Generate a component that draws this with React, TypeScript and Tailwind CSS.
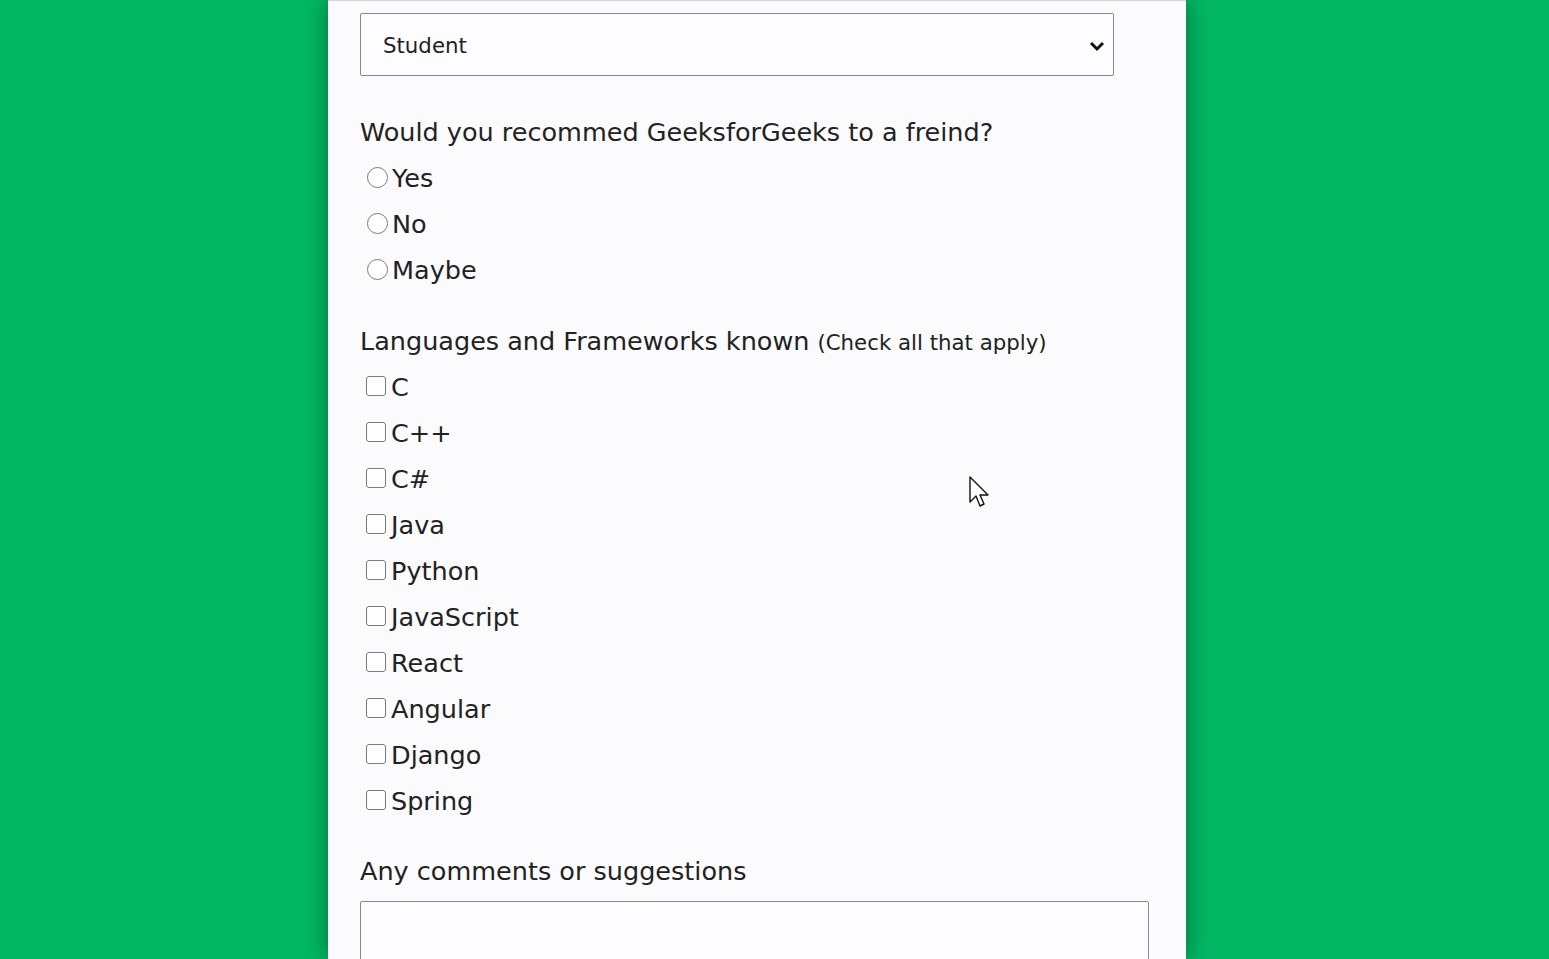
import React from "react";

const radios = ["Yes", "No", "Maybe"];
const langs = ["C", "C++", "C#", "Java", "Python", "JavaScript", "React", "Angular", "Django", "Spring"];

export default function App() {
  return (
    <div
      className="relative w-full h-[959px] overflow-hidden bg-[#02b764] text-[#222]"
      style={{ fontFamily: '"DejaVu Sans", Verdana, sans-serif' }}
    >
      <div className="ml-[328px] w-[858px] h-full bg-[#fbfbfe] border-t border-[#d4d4d4] shadow-[0_0_22px_rgba(0,40,10,0.5)] pl-[32px] pt-[12px]">
        <div className="relative w-[754px] h-[63px] border border-[#8a8a8a] rounded-[2px] bg-[#fdfdff] flex items-center pl-[22px] pt-[3px] text-[21.3px]">
          <span>Student</span>
          <svg className="absolute right-[8px] top-[27px]" width="16" height="11" viewBox="0 0 16 11">
            <path d="M2 2 L8 8 L14 2" fill="none" stroke="#111" strokeWidth="3" />
          </svg>
        </div>

        <div className="mt-[32px] h-[46px] flex items-center pt-[2px] text-[25.5px]">Would you recommed GeeksforGeeks to a freind?</div>
        {radios.map((r) => (
          <div key={r} className="h-[46px] flex items-center text-[25.5px]">
            <span className="ml-[7px] mr-[4px] w-[21px] h-[21px] rounded-full border border-[#7a7a7a] bg-white" />
            <span className="pt-[2px]">{r}</span>
          </div>
        ))}

        <div className="mt-[25px] h-[46px] flex items-center pt-[2px] text-[25.5px]">
          <span>Languages and Frameworks known</span>
          <span className="ml-[8px] text-[21.3px] mt-[3px]">(Check all that apply)</span>
        </div>
        {langs.map((l) => (
          <div key={l} className="h-[46px] flex items-center text-[25.5px]">
            <span className="ml-[6px] mr-[5px] w-[20px] h-[20px] rounded-[3px] border border-[#7a7a7a] bg-white" />
            <span className="pt-[2px]">{l}</span>
          </div>
        ))}

        <div className="mt-[24px] h-[46px] flex items-center pt-[2px] text-[25.5px]">Any comments or suggestions</div>
        <div className="mt-[8px] w-[789px] h-[120px] border border-[#8a8a8a] rounded-[2px] bg-[#fdfdff]" />
      </div>

      <svg className="absolute left-[969px] top-[476px]" width="22" height="34" viewBox="0 0 22 34">
        <path d="M1 1 L1 26 L7 20 L11 30 L15 28 L11 19 L19 19 Z" fill="#fff" stroke="#111" strokeWidth="1.4" strokeLinejoin="round" />
      </svg>
    </div>
  );
}
